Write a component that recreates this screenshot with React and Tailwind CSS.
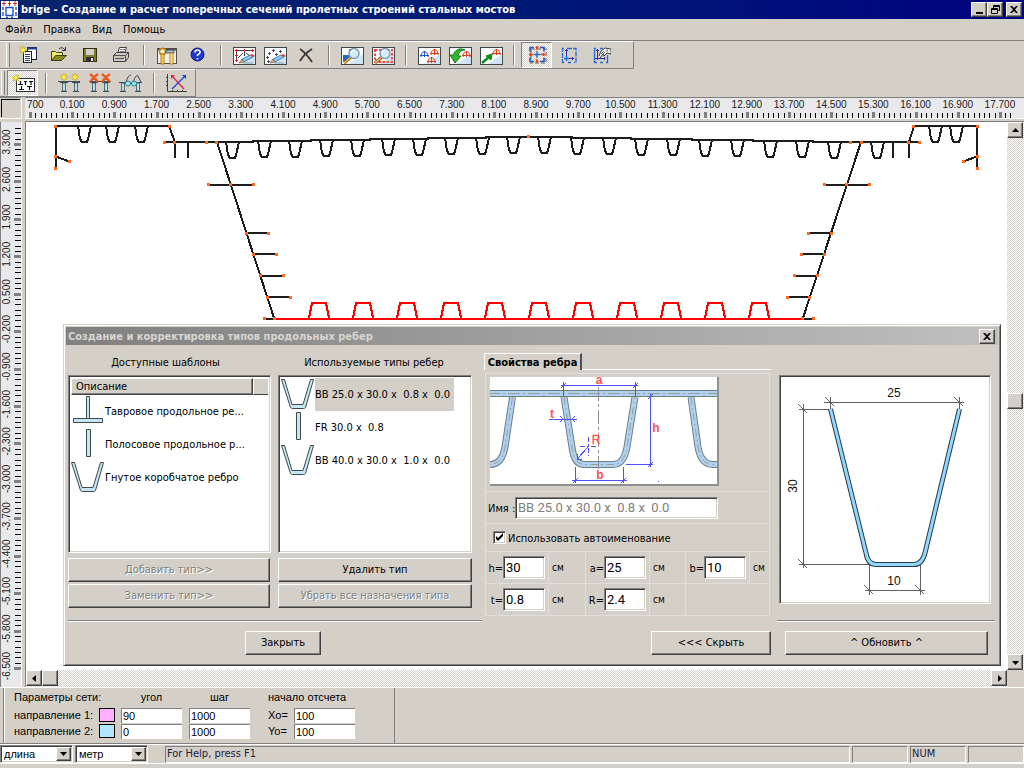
import React from "react";

const UI = "font-['DejaVu_Sans_Condensed','Noto_Sans',sans-serif]";
const ARIAL = "font-['Liberation_Sans',Arial,sans-serif]";
const RAISED =
  "border border-t-white border-l-white border-r-[#404040] border-b-[#404040] shadow-[inset_-1px_-1px_0_#808080] bg-[#d4d0c8]";
const SUNKEN =
  "border border-t-[#808080] border-l-[#808080] border-r-white border-b-white shadow-[inset_1px_1px_0_#404040,inset_-1px_-1px_0_#d4d0c8]";
const CHECKER =
  "bg-[repeating-conic-gradient(#d4d0c8_0_25%,#ffffff_0_50%)] bg-[length:2px_2px]";

/* ---------- toolbar icons, 24 x 20 ---------- */

function Icon({ children }) {
  return (
    <svg width="24" height="20" viewBox="0 0 24 20" fill="none" aria-hidden="true">
      {children}
    </svg>
  );
}

function Star({ x = 0, y = 0 }) {
  return (
    <g transform={`translate(${x} ${y})`} stroke="#c8b400" strokeWidth="1">
      <path d="M4 0v8M0 4h8M1 1l6 6M7 1l-6 6" />
      <path d="M4 2v4M2 4h4" stroke="#fff04a" strokeWidth="1.4" />
    </g>
  );
}

function Frame({ children }) {
  return (
    <Icon>
      <rect x="1.5" y="2.5" width="22" height="17" fill="#fdfdfd" stroke="#404848" />
      <path d="M23 9v10H9z" fill="#cfe4f6" />
      {children}
    </Icon>
  );
}

function Pencil() {
  return (
    <g>
      <path d="M7 18l3-4 2 3z" fill="#f0b070" stroke="#604020" strokeWidth=".6" />
      <path d="M10 14l8-4 3 2-9 5z" fill="#8cc4f0" stroke="#22609a" strokeWidth=".7" />
      <path d="M18 10l2-1 3 2-2 1z" fill="#e04030" />
      <path d="M12 18h9" stroke="#90a0b0" />
    </g>
  );
}

function Magnifier() {
  return (
    <g>
      <path d="M4 18l7-6" stroke="#8a5a20" strokeWidth="3" />
      <path d="M4 18l7-6" stroke="#f0b860" strokeWidth="1.6" />
      <circle cx="14" cy="8.5" r="5" fill="#d2ecf8" stroke="#7c98b0" strokeWidth="1.4" />
      <path d="M11 8q1-3 4-3" stroke="#fff" strokeWidth="1.2" />
    </g>
  );
}

function Bridge({ x, y, color }) {
  return (
    <g transform={`translate(${x} ${y})`} stroke={color} strokeWidth="1">
      <path d="M0 4.500h9M1 4q1-3.500 3.500-3.500t3.500 3.500M4.500 0v6M1 5v1M8 5v1" />
    </g>
  );
}

function Support({ x, y = 9 }) {
  return (
    <g transform={`translate(${x} ${y})`}>
      <path d="M0 .5h8M1 9.500h6" stroke="#405058" strokeWidth="1.2" />
      <rect x="2.5" y="1" width="3" height="8" fill="#b8e0f0" stroke="#405058" strokeWidth=".8" />
    </g>
  );
}

const icons = {
  create: (
    <Icon>
      <rect x="11.5" y="2.5" width="9" height="12" fill="#fff" stroke="#202040" />
      <path d="M11 3.500h10" stroke="#1c3f94" strokeWidth="2" />
      <rect x="7.5" y="6.5" width="8" height="11" fill="#fff" stroke="#202020" />
      <path d="M9 9.500h5M9 11.500h5M9 13.500h5M9 15.500h5" stroke="#304070" />
      <Star x={3} y={1} />
    </Icon>
  ),
  open: (
    <Icon>
      <path d="M4.500 15.500v-9h4l1 1h6v3" fill="#f4f060" stroke="#404010" />
      <path d="M4.500 15.500l4-5h11l-5 5z" fill="#8c8a28" stroke="#404010" />
      <path d="M12 4q3-3 6 1M18.500 2v3.500H15" stroke="#303030" />
    </Icon>
  ),
  save: (
    <Icon>
      <rect x="5.5" y="3.5" width="13" height="13" fill="#7f7d28" stroke="#303018" />
      <rect x="8" y="4" width="8" height="6" fill="#d4d0c8" />
      <rect x="8" y="12" width="8" height="4.5" fill="#303030" />
      <rect x="13" y="13" width="2" height="3" fill="#e8e8e8" />
    </Icon>
  ),
  print: (
    <Icon>
      <path d="M8.500 8.500l2-6h7l-2 6z" fill="#fff" stroke="#404040" />
      <path d="M11 4.500h5M10.500 6.500h5" stroke="#808080" />
      <path d="M4.500 10.500l3-3h12v5l-3 4h-12z" fill="#c8c8c4" stroke="#404040" />
      <path d="M4.500 10.500h12v6M16.500 10.500l3-3M6 13.500h9" stroke="#505050" />
      <path d="M12 12h2" stroke="#c8b020" />
    </Icon>
  ),
  tools: (
    <Icon>
      <rect x="2.5" y="3.5" width="19" height="15" fill="#f2efe6" stroke="#505048" />
      <path d="M3 4.500h18" stroke="#505048" strokeWidth="2" />
      <circle cx="7.5" cy="6.5" r="3" fill="#fff" stroke="#c48a10" strokeWidth="1.8" />
      <rect x="6" y="9" width="3" height="10" fill="#ffc84a" stroke="#a87010" strokeWidth=".8" />
      <path d="M11 8V6l2-1h6v3h-6z" fill="#a8bcc8" stroke="#404850" strokeWidth=".8" />
      <rect x="15" y="8" width="3" height="11" fill="#ffdf9a" stroke="#a87010" strokeWidth=".8" />
    </Icon>
  ),
  help: (
    <Icon>
      <circle cx="11.5" cy="9.5" r="6.5" fill="#2038d0" stroke="#101c80" />
      <path d="M9 7.500q0-2.500 2.500-2.500t2.500 2.200q0 1.300-1.500 2t-1 1.800M11.500 13v1.500" stroke="#fff" strokeWidth="1.7" />
    </Icon>
  ),
  editMesh: (
    <Frame>
      <path d="M4 5.500h16M12.500 5v6M4.500 6v10M11 8l-5 5M14 8l4 3" stroke="#404040" />
      <path d="M2.500 5.500h3M4.500 4v3M11 5.500h3M12.500 4v3M19 5.500h3M20.500 4v3M3 15.500h3M4.500 14v3M3 10.500h3" stroke="#e02030" />
      <Pencil />
    </Frame>
  ),
  editPoints: (
    <Frame>
      <path d="M9 5.500h3M10.500 4v3M5 8.500h3M6.500 7v3M12 9.500h3M13.500 8v3M3 12.500h3M4.500 11v3M16 6.500h3M17.500 5v3M4 16.500h3M5.500 15v3" stroke="#404040" strokeWidth=".9" />
      <Pencil />
    </Frame>
  ),
  remove: (
    <Icon>
      <path d="M6 4q6 4 12 13" stroke="#383838" strokeWidth="1.8" />
      <path d="M18 4Q10 9 6 16" stroke="#383838" strokeWidth="1.8" />
    </Icon>
  ),
  zoomView: (
    <Frame>
      <path d="M3 10h6v6H3zM9 4h5v5H9z" fill="#1c6cd8" />
      <Magnifier />
    </Frame>
  ),
  zoomWindow: (
    <Frame>
      <rect x="4" y="5" width="17" height="12" stroke="#f04848" strokeWidth="2" strokeDasharray="2.500 1.500" />
      <Magnifier />
    </Frame>
  ),
  sections: (
    <Frame>
      <Bridge x={3} y={6} color="#2050d0" />
      <Bridge x={13} y={4} color="#e83810" />
      <Bridge x={10} y={12} color="#e83810" />
    </Frame>
  ),
  loadSection: (
    <Frame>
      <Bridge x={14} y={6} color="#e83810" />
      <path d="M17 5Q9 1 5 10H2l5 8 6-7h-3Q11 5 17 5z" fill="#2eb82e" stroke="#167016" strokeWidth=".9" />
    </Frame>
  ),
  sendSection: (
    <Frame>
      <Bridge x={13} y={4} color="#e83810" />
      <path d="M3 18l7-6" stroke="#0c8c14" strokeWidth="2.4" />
      <path d="M13 9l-1 6-5-4z" fill="#0c8c14" stroke="#0c8c14" />
    </Frame>
  ),
  gridAll: (
    <Icon>
      <path d="M6 4h15v14H6z" stroke="#909090" strokeWidth="1.6" strokeDasharray="4 2" />
      <path d="M9 2.500H5v4M15 2.500h4v4M5 12.500v4h4M19 12.500v4h-4" stroke="#2058c8" strokeWidth="1.6" />
      <path d="M12 6v7M8.500 9.500h7" stroke="#2070e0" strokeWidth="1.5" />
      <path d="M12 1v4M10.500 2.500h3M12 14v4M10.500 16.500h3M4 9.500h4M5.500 8v3M16 9.500h4M18.500 8v3" stroke="#f04010" strokeWidth="1.6" />
    </Icon>
  ),
  gridAxes: (
    <Icon>
      <path d="M8 3.500H6.500v14H9M11 3.500h9v14h-2M12 17.500h3" stroke="#3068d0" strokeWidth="1.3" strokeDasharray="5 1" />
      <path d="M10.500 4v11M9 5.500h3M8 13.500h10M16.500 12v3" stroke="#3030a0" />
      <path d="M10.500 11v5M8 13.500h5" stroke="#2070e0" strokeWidth="1.4" />
    </Icon>
  ),
  gridEdit: (
    <Icon>
      <path d="M9 3.500H7.500v14H10M13 3.500h3M20.500 10v7.500H19M13 17.500h3" stroke="#3068d0" strokeWidth="1.3" />
      <path d="M10.500 4v11M9 5.500h3M8 13.500h10M17.500 12v3" stroke="#3030a0" />
      <path d="M12 11l2-5 4-3 6 1v5l-4-1-3 3-1-2-3 4" fill="#f4f4f4" stroke="#404040" />
      <path d="M14 9l3-3M15 10l3-3M20 4v3" stroke="#606060" />
    </Icon>
  ),
  newRibs: (
    <Icon>
      <rect x="5.5" y="5.5" width="18" height="13" fill="#fff" stroke="#303030" />
      <path d="M7 11.500h5M9.500 8v3M13 8.500h3M14.500 8v4M18 8.500h4M20 9v3M8 16.500h5M10.500 13v3M16 13.500h5M18.500 14v3" stroke="#101010" strokeWidth="1.2" />
      <Star x={1} y={1} />
    </Icon>
  ),
  assignRibs: (
    <Icon>
      <path d="M1 8.500h22" stroke="#405058" />
      <Support x={3} />
      <Support x={15} />
      <Star x={3} y={0} />
      <Star x={14} y={0} />
    </Icon>
  ),
  clearRibs: (
    <Icon>
      <path d="M1 8.500h22" stroke="#405058" />
      <Support x={2} />
      <Support x={14} />
      <path d="M2 1q4 3 8 8M10 1Q5 4 2 9M14 1q4 3 8 8M22 1q-5 3-8 8" stroke="#f05818" strokeWidth="2.2" />
    </Icon>
  ),
  viewRibs: (
    <Icon>
      <Support x={0} />
      <Support x={15} />
      <path d="M7 9q2-7 5-7M14 9q3-8 5-6l3 6" stroke="#404850" />
      <circle cx="9" cy="10.5" r="2.5" fill="#8ceef4" stroke="#308090" />
      <circle cx="15" cy="10.5" r="2.5" fill="#8ceef4" stroke="#308090" />
      <path d="M11 10h2" stroke="#404850" />
    </Icon>
  ),
  axes: (
    <Icon>
      <path d="M2.500 1v17.500H22M1 4.500h2M1 8.500h2M1 12.500h2M7.500 17v2M12.500 17v2M17.500 17v2" stroke="#404040" />
      <path d="M19 16L7 3" stroke="#e82040" strokeWidth="1.3" />
      <path d="M6 6V2h4z" fill="#e82040" />
      <path d="M7 16L20 3" stroke="#2040d8" strokeWidth="1.3" />
      <path d="M21 6V2h-4z" fill="#2040d8" />
    </Icon>
  ),
};

function ToolButton({ icon, label, pressed = false }) {
  return (
    <button
      type="button"
      aria-label={label}
      aria-pressed={pressed}
      className={`flex h-[26px] w-[31px] shrink-0 items-center justify-center border ${
        pressed ? `border-t-[#808080] border-l-[#808080] border-r-white border-b-white ${CHECKER}` : "border-transparent"
      }`}
    >
      {icons[icon]}
    </button>
  );
}

function Sep() {
  return (
    <span className="flex w-[15px] shrink-0 justify-center">
      <span className="my-[3px] border-l border-r border-l-[#808080] border-r-white" />
    </span>
  );
}

function ToolBar({ groups, className }) {
  return (
    <div
      role="toolbar"
      className={`flex h-7 items-stretch self-start border-t border-r border-b border-t-white border-r-[#808080] border-b-[#808080] ${className}`}
    >
      <span className="my-px mr-[2px] ml-1 w-1 border-r border-l border-l-white border-r-[#808080]" />
      {groups.map((group, i) => (
        <React.Fragment key={i}>
          {i > 0 && <Sep />}
          {group.map(([icon, label, pressed]) => (
            <ToolButton key={icon} icon={icon} label={label} pressed={pressed} />
          ))}
        </React.Fragment>
      ))}
    </div>
  );
}

const mainTools = [
  [["create", "Создать"], ["open", "Открыть"], ["save", "Сохранить"], ["print", "Печать"]],
  [["tools", "Настройка"], ["help", "Справка"]],
  [["editMesh", "Правка сети"], ["editPoints", "Правка точек"], ["remove", "Удалить"]],
  [["zoomView", "Масштаб"], ["zoomWindow", "Масштаб рамкой"]],
  [["sections", "Сечения"], ["loadSection", "Загрузить сечение"], ["sendSection", "Передать сечение"]],
  [["gridAll", "Привязка", true], ["gridAxes", "Оси"], ["gridEdit", "Свойства сети"]],
];

const ribTools = [
  [["newRibs", "Типы ребер", true]],
  [["assignRibs", "Назначить ребра"], ["clearRibs", "Снять ребра"], ["viewRibs", "Просмотр ребер"]],
  [["axes", "Система координат"]],
];

/* ---------- window chrome ---------- */

function Cross() {
  return (
    <svg width="8" height="7" viewBox="0 0 8 7" aria-hidden="true">
      <path d="M0 0h2l2 2 2-2h2L5 3.500 8 7H6L4 5 2 7H0l3-3.500z" fill="#000" />
    </svg>
  );
}

function CaptionButton({ label, children }) {
  return (
    <button type="button" aria-label={label} className={`flex h-[15px] w-4 items-center justify-center ${RAISED}`}>
      {children}
    </button>
  );
}

function TitleBar() {
  return (
    <header className="flex h-[19px] items-center bg-linear-to-r from-[#08246b] to-[#000080] pr-[2px] pl-px">
      <svg width="17" height="17" viewBox="0 0 17 17" aria-hidden="true">
        <rect width="17" height="17" fill="#fff" />
        <path d="M1 2.500h4M7 2.500h3M12 2.500h4M3 0v5M8.500 0v5M14 0v5" stroke="#d03020" />
        <path d="M5 6.500h7v8H5zM2 6v3M2 11v4M15 6v3M15 11v4M5 16.500h2M10 16.500h2" stroke="#2050d0" strokeWidth="1.4" fill="none" />
      </svg>
      <h1 className="ml-[3px] flex-1 truncate pt-px text-[11px] font-bold text-white">
        brige - Создание и расчет поперечных сечений пролетных строений стальных мостов
      </h1>
      <CaptionButton label="Свернуть">
        <span className="mt-[7px] h-[2px] w-[7px] bg-black" />
      </CaptionButton>
      <CaptionButton label="Восстановить">
        <svg width="9" height="9" viewBox="0 0 9 9" fill="none" stroke="#000" aria-hidden="true">
          <path d="M2.500 3V.5h6v5H6M2 1.500h7M.5 3.500h6v5h-6zM0 4.500h7" />
        </svg>
      </CaptionButton>
      <span className="w-[3px]" />
      <CaptionButton label="Закрыть окно">
        <Cross />
      </CaptionButton>
    </header>
  );
}

/* ---------- rulers ---------- */

function HorizontalRuler() {
  const majors = Array.from({ length: 24 }, (_, i) => ({ x: 5 + i * 42.17, v: (i * 0.8 - 0.7).toFixed(3) }));
  const minors = Array.from({ length: 187 }, (_, i) => 5 + i * 5.271).filter((x) => x < 988);
  return (
    <div className="min-w-0 overflow-hidden border-t border-b border-t-[#808080] border-b-white bg-[#e9e9ec]">
      <svg className="block h-full w-full" shapeRendering="crispEdges">
        {minors.map((x, i) => (
          <rect key={i} x={Math.round(x)} y="15" width="1" height="5" fill="#000" />
        ))}
        {majors.map(({ x, v }, i) => (
          <g key={v}>
            <rect x={Math.round(x) - 1} y="14" width="3" height="6" fill="#808080" />
            <text x={i === 0 ? 2 : x} y="10" textAnchor={i === 0 ? "start" : "middle"} fontSize="10" fill="#202020">
              {i === 0 ? "700" : v}
            </text>
          </g>
        ))}
      </svg>
    </div>
  );
}

function VerticalRuler() {
  const majors = Array.from({ length: 15 }, (_, i) => ({ y: 22 + i * 37.43, v: (3.3 - i * 0.7).toFixed(3) }));
  const minors = Array.from({ length: 101 }, (_, i) => 6 + i * 5.347);
  return (
    <div className="mr-[3px] min-h-0 overflow-hidden border-r border-l border-r-white border-l-[#808080] bg-[#e9e9ec]">
      <svg className="block h-full w-full" shapeRendering="crispEdges">
        {minors.map((y, i) => (
          <rect key={i} x="14" y={Math.round(y)} width="6" height="1" fill="#000" />
        ))}
        {majors.map(({ y, v }) => (
          <g key={v}>
            <rect x="13" y={Math.round(y) - 1} width="7" height="3" fill="#808080" />
            <text transform={`translate(9 ${y - 2}) rotate(-90)`} textAnchor="middle" fontSize="10" fill="#202020">
              {v}
            </text>
          </g>
        ))}
      </svg>
    </div>
  );
}

/* ---------- bridge cross-section ---------- */

const deckRibs = [
  [84, 126], [112, 126], [141, 126],
  [232, 142], [264, 141], [295, 141], [326, 140], [357, 140], [388, 139], [419, 139], [451, 138],
  [482, 138], [513, 137], [544, 137], [577, 138], [609, 138], [641, 139], [673, 139], [705, 140],
  [737, 140], [770, 141], [802, 141], [834, 142], [877, 142],
  [935, 126], [956, 126],
];
const bottomRibs = [319, 363, 407, 451, 495, 539, 583, 627, 671, 715, 759];
const shelves = [
  [208, 254, 185], [246, 269, 233], [253, 277, 254], [260, 284, 276], [267, 291, 297], [264, 275, 319],
  [824, 870, 185], [808, 832, 233], [801, 825, 254], [794, 818, 276], [787, 810, 297], [803, 814, 319],
];
const nodes = [
  [55, 126], [55, 156], [55, 168], [69, 161], [169, 126], [174, 142], [164, 142], [206, 142], [216, 142],
  [208, 184], [230, 184], [253, 184], [246, 233], [268, 233], [253, 254], [276, 254], [260, 275], [283, 275],
  [267, 297], [290, 297], [264, 318], [274, 318], [528, 136],
  [913, 126], [977, 126], [977, 156], [977, 168], [963, 161], [908, 142], [919, 142], [850, 142], [861, 142],
  [824, 184], [846, 184], [869, 184], [831, 233], [808, 233], [824, 254], [801, 254], [817, 275], [794, 275],
  [809, 297], [787, 297], [813, 318], [802, 318],
];

function BridgeSection() {
  return (
    <svg className="block h-full w-full" role="img" aria-label="Поперечное сечение">
      <g transform="translate(-26 -122)" fill="none" strokeWidth="2" stroke="#1c1c1c" shapeRendering="crispEdges">
        <path d="M169 126H56V168M56 156.500L69 161.500M169 126L175 142V158M188 142V158" />
        <path d="M164 142H253V141H311V140H370V139H428V138H486V137H572V138H631V139H692V140H753V141H813V142H919" />
        <path d="M913 126H977V168M977 156.500L963 161.500M914 126L909 142V158M893 142V158" />
        {deckRibs.map(([x, y]) => (
          <path key={x} d={`M${x - 6} ${y}L${x - 4} ${y + 13}L${x - 2} ${y + 16}H${x + 3}L${x + 4} ${y + 13}L${x + 7} ${y}`} />
        ))}
        <path d="M217 142L274 318M861 142L803 318" />
        {shelves.map(([a, b, y]) => (
          <path key={`${a}-${y}`} d={`M${a} ${y}H${b}`} />
        ))}
        <g stroke="#ff0000">
          <path d="M275 319H803" />
          {bottomRibs.map((x) => (
            <path key={x} d={`M${x - 10} 318L${x - 7} 303H${x + 7}L${x + 10} 318`} />
          ))}
        </g>
        {nodes.map(([x, y]) => (
          <rect key={`${x}-${y}`} x={x - 1} y={y - 1} width="3" height="3" fill="#ff6a1c" stroke="none" />
        ))}
      </g>
    </svg>
  );
}

/* ---------- scroll bars ---------- */

function ScrollButton({ dir, label }) {
  const d = { up: "M0 5h7L3.500 1z", down: "M0 2h7L3.500 6z", left: "M5 0v7L1 3.500z", right: "M2 0v7l4-3.500z" }[dir];
  return (
    <button type="button" aria-label={label} className={`flex size-4 shrink-0 items-center justify-center ${RAISED}`}>
      <svg width="7" height="7" viewBox="0 0 7 7" aria-hidden="true">
        <path d={d} />
      </svg>
    </button>
  );
}

/* ---------- dialog ---------- */

const ribShapes = {
  tee: <path d="M15.500 1.500h3v22h-3zM2.500 23.500h29v4h-29z" />,
  flat: <path d="M15.500 1.500h4v27h-4z" />,
  box: <path d="M1.500 1.500h3l7.500 25h11l7.500-25h3l-8 28q-.5 1-2 1h-11q-1.500 0-2-1z" transform="translate(-1 0)" />,
};

function RibItem({ shape, text, selected = false }) {
  return (
    <li role="option" aria-selected={selected} className="flex h-[33px]">
      <svg width="34" height="32" viewBox="0 0 34 32" fill="#c4e8f8" stroke="#404848" aria-hidden="true">
        {ribShapes[shape]}
      </svg>
      <span className={`flex items-center pt-[2px] pr-1 whitespace-pre text-[11px] ${selected ? "bg-[#d4d0c8]" : ""}`}>
        {text}
      </span>
    </li>
  );
}

function PushButton({ children, className = "", disabled = false }) {
  return (
    <button
      type="button"
      disabled={disabled}
      className={`h-6 pt-px text-[11px] whitespace-nowrap ${RAISED} ${disabled ? "text-[#808080] [text-shadow:1px_1px_0_#fff]" : "text-black"} ${className}`}
    >
      {children}
    </button>
  );
}

function Groove({ className = "" }) {
  return <div className={`h-[2px] border-t border-b border-t-[#808080] border-b-white ${className}`} />;
}

function Arrow({ x, y }) {
  return <path d={`M${x - 2} ${y + 3}L${x + 3} ${y - 2}`} />;
}

function RibScheme() {
  const ribs = [
    "M564 398L572 448Q574 465.500 584 465.500H613Q624 465.500 627 448L635 398",
    "M512.500 398L505 448Q502 465.500 490 465.500H486",
    "M691 398L698 448Q701 465.500 713 465.500H720",
  ];
  return (
    <div className="w-[229px] border-r-2 border-b-2 border-[#909090] bg-white">
      <svg viewBox="490 378 227 107" className="block w-full" role="img" aria-label="Схема ребра">
        <g fill="none">
          {ribs.map((d) => (
            <g key={d}>
              <path d={d} stroke="#6c8080" strokeWidth="7" />
              <path d={d} stroke="#b0d0f4" strokeWidth="5" />
              <path d={d} stroke="#98a090" strokeDasharray="8 3 2 3" />
            </g>
          ))}
          <path d="M488 394.500H720" stroke="#6c8080" strokeWidth="7" />
          <path d="M488 394.500H720" stroke="#b0d0f4" strokeWidth="5" />
          <path d="M488 394.500H720" stroke="#98a090" strokeDasharray="12 3 2 3" />
          <path d="M598.500 388V470" stroke="#909090" strokeDasharray="14 3 3 3" />
          <g stroke="#5050ff" shapeRendering="crispEdges">
            <path d="M561 386.500H638M563.500 383V397M635.500 383V397M549 420.500H577M650.500 395V468M626 465.500H653" />
            <path d="M572 481.500H627M575.500 468V484M623.500 468V484" />
            <path d="M580 447.500H597M588.500 438V457" strokeDasharray="5 2 2 2" />
            <path d="M588 448L577 460M577 455V460H582" />
            <path d="M560 417l3 3-3 3M575 417l-3 3 3 3" />
            <Arrow x={563} y={386} />
            <Arrow x={635} y={386} />
            <Arrow x={650} y={397} />
            <Arrow x={650} y={465} />
            <Arrow x={575} y={481} />
            <Arrow x={623} y={481} />
          </g>
          <rect x="658" y="482" width="1" height="1" fill="#5050ff" />
        </g>
        <g fill="#ff5050" fontSize="12" fontWeight="bold" textAnchor="middle" className={ARIAL}>
          <text x="599" y="385">a</text>
          <text x="552" y="419">t</text>
          <text x="596" y="445" fontWeight="normal" stroke="#ff5050" strokeWidth=".3">R</text>
          <text x="656" y="433">h</text>
          <text x="600" y="480">b</text>
        </g>
      </svg>
    </div>
  );
}

function RibPreview() {
  const rib = "M830.500 409L866 553Q868 564.500 876 564.500H914Q922 564.500 925 553L959.500 409";
  const ticks = [[830, 402], [959, 402], [803, 409], [803, 564], [869, 590], [920, 590]];
  return (
    <svg viewBox="782 378 206 223" className="block w-full" role="img" aria-label="Вид ребра">
      <g fill="none" stroke="#606060" shapeRendering="crispEdges">
        <path d="M824 402.500H964M830.500 397V410M959.500 397V410M803.500 404V568M799 409.500H829M799 564.500H874" />
        <path d="M865 590.500H925M869.500 565V595M920.500 565V595" />
        {ticks.map(([x, y]) => (
          <path key={`${x}-${y}`} d={`M${x - 5} ${y - 5}L${x + 4} ${y + 4}`} />
        ))}
      </g>
      <path d={rib} fill="none" stroke="#303840" strokeWidth="5" />
      <path d={rib} fill="none" stroke="#90d8ff" strokeWidth="3" />
      <g fontSize="12" textAnchor="middle" fill="#101010" className={ARIAL}>
        <text x="894" y="397">25</text>
        <text transform="translate(797 486) rotate(-90)">30</text>
        <text x="894" y="585">10</text>
      </g>
    </svg>
  );
}

function Dimension({ name, value, last = false }) {
  return (
    <>
      <div className="flex items-center justify-end border-r border-[#e0dddb] pr-[3px]">
        <label htmlFor={`dim-${name}`} className="pt-1 text-[11px]">
          {name}=
        </label>
        <input
          id={`dim-${name}`}
          defaultValue={value}
          className={`h-[23px] w-[42px] bg-white px-[2px] font-['Roboto',sans-serif] text-[13px] ${SUNKEN}`}
        />
      </div>
      <div className={`flex items-center pl-[3px] text-[10px] ${last ? "" : "border-r border-[#e0dddb]"}`}>см</div>
    </>
  );
}

function RibDialog() {
  return (
    <section
      role="dialog"
      aria-labelledby="rib-dialog-title"
      className={`absolute top-[202px] left-[37px] w-[938px] border border-t-[#d4d0c8] border-r-[#404040] border-b-[#404040] border-l-[#d4d0c8] bg-[#d4d0c8] p-[2px] shadow-[inset_1px_1px_0_#fff,inset_-1px_-1px_0_#808080] ${UI}`}
    >
      <div className="flex h-[18px] items-center bg-linear-to-r from-[#808080] to-[#c0c0c0] pr-[3px] pl-[2px]">
        <h2 id="rib-dialog-title" className="flex-1 pt-[2px] text-[11px] font-bold text-[#d8d5cf]">
          Создание и корректировка типов продольных ребер
        </h2>
        <CaptionButton label="Закрыть диалог">
          <Cross />
        </CaptionButton>
      </div>

      <div className="flex px-[2px] pb-[8px]">
        <div className="flex w-[414px] flex-col">
          <div className="flex gap-[7px]">
            <div className="flex w-[203px] flex-col">
              <h3 id="templates" className="flex h-[30px] items-center justify-center pt-[6px] pr-2 text-[11px]">
                Доступные шаблоны
              </h3>
              <div className={`h-[178px] bg-white p-[2px] ${SUNKEN}`}>
                <div className="flex h-[17px] text-[11px]">
                  <span className={`flex w-[182px] items-center pt-[2px] pl-1 ${RAISED}`}>Описание</span>
                  <span className="flex-1 border border-r-0 border-white border-b-[#404040] bg-[#d4d0c8]" />
                </div>
                <ul role="listbox" aria-labelledby="templates">
                  <RibItem shape="tee" text="Тавровое продольное ре..." />
                  <RibItem shape="flat" text="Полосовое продольное р..." />
                  <RibItem shape="box" text="Гнутое коробчатое ребро" />
                </ul>
              </div>
              <PushButton disabled className="mt-[5px] mr-px">Добавить тип&gt;&gt;</PushButton>
              <PushButton disabled className="mt-[2px] mr-px">Заменить тип&gt;&gt;</PushButton>
            </div>
            <div className="flex w-[194px] flex-col">
              <h3 id="used-types" className="flex h-[30px] items-center justify-center pt-[6px] pr-[2px] text-[11px]">
                Используемые типы ребер
              </h3>
              <div className={`h-[178px] bg-white p-[2px] ${SUNKEN}`}>
                <ul role="listbox" aria-labelledby="used-types">
                  <RibItem shape="box" text="BB 25.0 x 30.0 x  0.8 x  0.0" selected />
                  <RibItem shape="flat" text="FR 30.0 x  0.8" />
                  <RibItem shape="box" text="BB 40.0 x 30.0 x  1.0 x  0.0" />
                </ul>
              </div>
              <PushButton className="mt-[5px]">Удалить тип</PushButton>
              <PushButton disabled className="mt-[2px]">Убрать все назначения типа</PushButton>
            </div>
          </div>
          <Groove className="mt-3" />
          <PushButton className="mt-[9px] ml-4 w-[76px] self-center">Закрыть</PushButton>
        </div>

        <div className="ml-[2px] flex w-[287px] flex-col">
          <div role="tablist" className="mt-[8px] flex h-[17px] items-stretch">
            <button
              type="button"
              role="tab"
              aria-selected="true"
              className="w-[98px] border-t border-r-2 border-l border-t-white border-r-[#505050] border-l-white pt-px text-[11px] leading-4 font-bold whitespace-nowrap"
            >
              Свойства ребра
            </button>
            <span className="flex-1 border-b border-white" />
          </div>
          <form className="mx-px mt-[3px] border border-[#e0dddb]" onSubmit={(e) => e.preventDefault()}>
            <div className="h-[117px] pt-[3px] pl-1">
              <RibScheme />
            </div>
            <div className="flex h-8 items-center border-t border-[#e0dddb] pl-[2px]">
              <label htmlFor="rib-name" className="w-[27px] pt-1 text-[11px] whitespace-nowrap">
                Имя :
              </label>
              <input
                id="rib-name"
                disabled
                defaultValue="BB 25.0 x 30.0 x  0.8 x  0.0"
                className={`h-[22px] w-[203px] bg-white px-[2px] font-['Roboto',sans-serif] text-[13px] text-[#808080] ${SUNKEN}`}
              />
            </div>
            <div className="flex h-7 items-center gap-[2px] border-t border-[#e0dddb] pl-[7px]">
              <span className="relative flex size-[13px]">
                <input id="auto-name" type="checkbox" defaultChecked className={`peer size-[13px] appearance-none bg-white ${SUNKEN}`} />
                <svg viewBox="0 0 13 13" className="pointer-events-none absolute inset-0 hidden peer-checked:block" aria-hidden="true">
                  <path d="M3 5v3l2 2 5-5V2L5 7z" />
                </svg>
              </span>
              <label htmlFor="auto-name" className="pt-1 text-[11px]">
                Использовать автоименование
              </label>
            </div>
            <div className="grid h-8 grid-cols-[63px_37px_64px_36px_64px_1fr] border-t border-[#e0dddb]">
              <Dimension name="h" value="30" />
              <Dimension name="a" value="25" />
              <Dimension name="b" value="10" last />
            </div>
            <div className="grid h-8 grid-cols-[63px_37px_64px_36px_64px_1fr] border-t border-[#e0dddb]">
              <Dimension name="t" value="0.8" />
              <Dimension name="R" value="2.4" />
            </div>
          </form>
          <PushButton className="mt-auto w-[120px] self-end">&lt;&lt;&lt; Скрыть</PushButton>
        </div>

        <div className="ml-[6px] flex w-[218px] flex-col">
          <div className={`mt-[30px] mr-1 ml-[2px] bg-white p-[2px] ${SUNKEN}`}>
            <RibPreview />
          </div>
          <Groove className="mt-auto" />
          <PushButton className="mt-[9px] mr-[7px] ml-[8px]">^ Обновить ^</PushButton>
        </div>
      </div>
    </section>
  );
}

/* ---------- bottom bars ---------- */

function GridField({ id, label, value }) {
  return (
    <input
      id={id}
      aria-label={label}
      defaultValue={value}
      className="h-[15px] w-[61px] border-t border-l border-[#808080] bg-white px-px text-[11px] leading-3"
    />
  );
}

function GridParameters() {
  return (
    <section className="flex h-14 border-t border-white pl-1">
      <div className="flex w-[391px] border-r border-l border-r-[#808080] border-l-white text-[11px] shadow-[-1px_0_0_#808080]">
        <div className="grid grid-cols-[85px_22px_68px_79px_26px_1fr] grid-rows-[19px_16px_16px] items-center pl-[9px]">
          <span className="col-span-2 whitespace-nowrap">Параметры сети:</span>
          <span className="pr-[7px] text-center">угол</span>
          <span className="pr-[18px] text-center">шаг</span>
          <span className="col-span-2 whitespace-nowrap">начало отсчета</span>

          <label htmlFor="angle-1" className="whitespace-nowrap">направление 1:</label>
          <button type="button" aria-label="Цвет направления 1" className="h-[14px] w-4 border border-black bg-[#ffb0ff]" />
          <GridField id="angle-1" value="90" />
          <GridField label="Шаг 1" value="1000" />
          <label htmlFor="origin-x">Xo=</label>
          <GridField id="origin-x" value="100" />

          <label htmlFor="angle-2" className="whitespace-nowrap">направление 2:</label>
          <button type="button" aria-label="Цвет направления 2" className="h-[14px] w-4 border border-black bg-[#b0e8ff]" />
          <GridField id="angle-2" value="0" />
          <GridField label="Шаг 2" value="1000" />
          <label htmlFor="origin-y">Yo=</label>
          <GridField id="origin-y" value="100" />
        </div>
      </div>
    </section>
  );
}

function UnitSelect({ label, value }) {
  return (
    <span className="relative flex">
      <select
        aria-label={label}
        defaultValue={value}
        className={`h-[18px] w-[73px] appearance-none bg-white pl-[3px] text-[11px] leading-3 ${SUNKEN}`}
      >
        <option>{value}</option>
      </select>
      <span className={`pointer-events-none absolute inset-y-[2px] right-[2px] flex w-[15px] items-center justify-center ${RAISED}`}>
        <svg width="7" height="4" viewBox="0 0 7 4" aria-hidden="true">
          <path d="M0 0h7L3.500 4z" />
        </svg>
      </span>
    </span>
  );
}

function StatusPane({ children, className }) {
  return (
    <span
      className={`flex h-[17px] items-center border border-t-[#808080] border-r-white border-b-white border-l-[#808080] pt-px pl-px text-[11px] text-[#202040] ${UI} ${className}`}
    >
      {children}
    </span>
  );
}

function StatusBar() {
  return (
    <footer className="border-t border-[#808080]">
      <div className="flex items-center border-y border-white">
        <div className="flex gap-[2px]">
          <UnitSelect label="Величина" value="длина" />
          <UnitSelect label="Единица" value="метр" />
        </div>
        <div className="ml-[17px] flex flex-1 gap-[2px]">
          <StatusPane className="flex-1">For Help, press F1</StatusPane>
          <StatusPane className="w-14" />
          <StatusPane className="w-14">NUM</StatusPane>
          <StatusPane className="w-14" />
        </div>
      </div>
      <div className="h-1" />
    </footer>
  );
}

export default function App() {
  return (
    <div className={`flex h-screen min-h-[700px] flex-col overflow-hidden bg-[#d4d0c8] text-black ${ARIAL}`}>
      <div className={UI}>
        <TitleBar />
        <nav className="flex h-[22px] items-center gap-[11px] border-b border-[#808080] pt-px pl-[5px] text-[11px]">
          {["Файл", "Правка", "Вид", "Помощь"].map((item) => (
            <button type="button" key={item}>
              {item}
            </button>
          ))}
        </nav>
      </div>
      <div className="flex flex-col">
        <ToolBar groups={mainTools} className="w-[634px] pl-[2px]" />
        <ToolBar groups={ribTools} className="w-[199px] -ml-[3px]" />
      </div>

      <main className="grid min-h-0 flex-1 grid-cols-[25px_1fr] grid-rows-[22px_1fr]">
        <div className="mr-[3px] border-t border-r border-b border-t-[#808080] border-r-white border-b-white p-px">
          <div className="h-full border-t border-l border-black" />
        </div>
        <HorizontalRuler />
        <div className="mt-[3px] flex min-h-0 flex-col [&>div]:flex-1">
          <VerticalRuler />
        </div>
        <div className="relative mt-[2px] grid min-h-0 min-w-0 grid-cols-[1fr_17px] grid-rows-[1fr_17px] border-t border-l border-[#808080]">
          <div className="min-h-0 min-w-0 overflow-hidden bg-white">
            <BridgeSection />
          </div>
          <div className={`flex flex-col justify-between pr-px ${CHECKER}`}>
            <ScrollButton dir="up" label="Вверх" />
            <div className={`mt-[10px] h-4 ${RAISED}`} />
            <ScrollButton dir="down" label="Вниз" />
          </div>
          <div className={`flex ${CHECKER}`}>
            <ScrollButton dir="left" label="Влево" />
            <div className={`size-4 ${RAISED}`} />
            <span className="flex-1" />
            <ScrollButton dir="right" label="Вправо" />
          </div>
          <RibDialog />
        </div>
      </main>

      <GridParameters />
      <StatusBar />
    </div>
  );
}
